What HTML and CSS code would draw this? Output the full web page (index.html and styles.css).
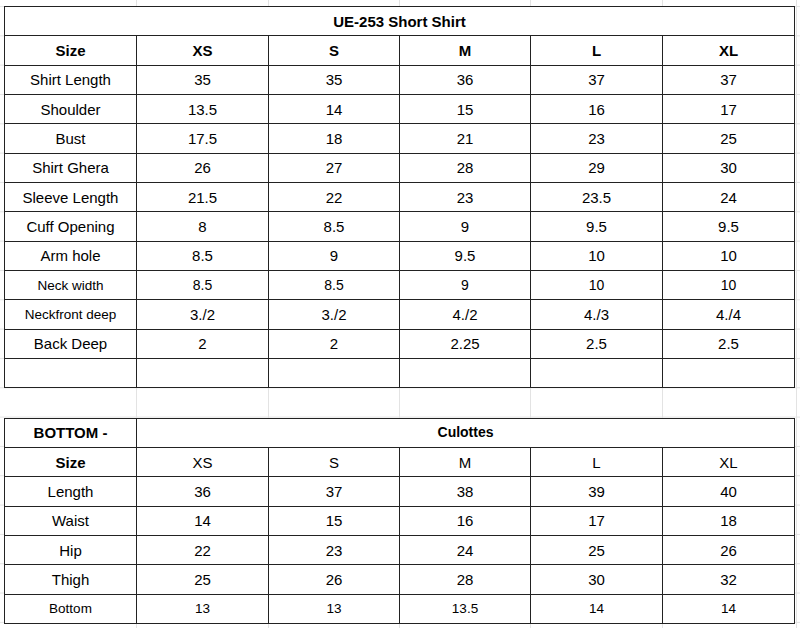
FILE: index.html
```html
<!DOCTYPE html>
<html lang="en">
<head>
<meta charset="utf-8">
<title>UE-253 Short Shirt</title>
<link rel="stylesheet" href="styles.css">
</head>
<body>
<div class="sheet">
  <table class="chart">
    <colgroup>
      <col class="c1"><col class="c2"><col class="c3"><col class="c4"><col class="c5"><col class="c6">
    </colgroup>
    <tr><td colspan="6" class="b">UE-253 Short Shirt</td></tr>
    <tr class="b"><td>Size</td><td>XS</td><td>S</td><td>M</td><td>L</td><td>XL</td></tr>
    <tr><td>Shirt Length</td><td>35</td><td>35</td><td>36</td><td>37</td><td>37</td></tr>
    <tr><td>Shoulder</td><td>13.5</td><td>14</td><td>15</td><td>16</td><td>17</td></tr>
    <tr><td>Bust</td><td>17.5</td><td>18</td><td>21</td><td>23</td><td>25</td></tr>
    <tr><td>Shirt Ghera</td><td>26</td><td>27</td><td>28</td><td>29</td><td>30</td></tr>
    <tr><td>Sleeve Length</td><td>21.5</td><td>22</td><td>23</td><td>23.5</td><td>24</td></tr>
    <tr><td>Cuff Opening</td><td>8</td><td>8.5</td><td>9</td><td>9.5</td><td>9.5</td></tr>
    <tr><td>Arm hole</td><td>8.5</td><td>9</td><td>9.5</td><td>10</td><td>10</td></tr>
    <tr class="md"><td class="lbl">Neck width</td><td>8.5</td><td>8.5</td><td>9</td><td>10</td><td>10</td></tr>
    <tr><td class="lbl">Neckfront deep</td><td>3./2</td><td>3./2</td><td>4./2</td><td>4./3</td><td>4./4</td></tr>
    <tr><td>Back Deep</td><td>2</td><td>2</td><td>2.25</td><td>2.5</td><td>2.5</td></tr>
    <tr><td></td><td></td><td></td><td></td><td></td><td></td></tr>
  </table>

  <table class="chart second">
    <colgroup>
      <col class="c1"><col class="c2"><col class="c3"><col class="c4"><col class="c5"><col class="c6">
    </colgroup>
    <tr><td class="b">BOTTOM -</td><td colspan="5" class="b title-sm">Culottes</td></tr>
    <tr><td class="b">Size</td><td>XS</td><td>S</td><td>M</td><td>L</td><td>XL</td></tr>
    <tr><td>Length</td><td>36</td><td>37</td><td>38</td><td>39</td><td>40</td></tr>
    <tr><td>Waist</td><td>14</td><td>15</td><td>16</td><td>17</td><td>18</td></tr>
    <tr><td>Hip</td><td>22</td><td>23</td><td>24</td><td>25</td><td>26</td></tr>
    <tr><td>Thigh</td><td>25</td><td>26</td><td>28</td><td>30</td><td>32</td></tr>
    <tr class="sm"><td>Bottom</td><td>13</td><td>13</td><td>13.5</td><td>14</td><td>14</td></tr>
  </table>
</div>
</body>
</html>
```

FILE: styles.css
```css
html, body {
  margin: 0;
  padding: 0;
}

body {
  width: 800px;
  height: 628px;
  overflow: hidden;
  font-family: "Liberation Sans", Arial, sans-serif;
  color: #000;
  background-color: #fff;
  background-image:
    linear-gradient(to right,
      transparent 0 136px, #e3e3e3 136px 137px,
      transparent 137px 268px, #e3e3e3 268px 269px,
      transparent 269px 399px, #e3e3e3 399px 400px,
      transparent 400px 530px, #e3e3e3 530px 531px,
      transparent 531px 662px, #e3e3e3 662px 663px,
      transparent 663px 796px, #e3e3e3 796px 797px,
      transparent 797px),
    linear-gradient(to bottom, #e3e3e3 0 1px, transparent 1px);
  background-size: 100% 100%, 100% 29.333px;
  background-position: 0 0, 0 6px;
  background-repeat: no-repeat, repeat-y;
}

.sheet {
  padding: 6px 0 0 4px;
}

.chart {
  border-collapse: collapse;
  table-layout: fixed;
  width: 790px;
  background: #fff;
}

.chart.second {
  margin-top: 29.333px;
}

.c1 { width: 132px; }
.c2 { width: 132px; }
.c3 { width: 131px; }
.c4 { width: 131px; }
.c5 { width: 132px; }
.c6 { width: 132px; }

.chart tr {
  height: 29.333px;
}

.chart td {
  border: 1px solid #222;
  padding: 0;
  text-align: center;
  vertical-align: middle;
  font-size: 15px;
  line-height: 17px;
  white-space: nowrap;
}

.chart .b,
.chart tr.b td {
  font-weight: bold;
}

.chart td.title-sm {
  font-size: 14px;
}

.chart tr.sm td {
  font-size: 13.5px;
}

.chart tr.md td {
  font-size: 14px;
}

.chart td.lbl,
.chart tr.md td.lbl {
  font-size: 13.5px;
}
```
